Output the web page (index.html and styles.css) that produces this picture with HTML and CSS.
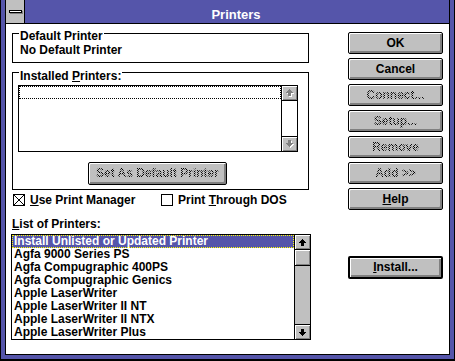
FILE: index.html
```html
<!DOCTYPE html>
<html lang="en">
<head>
    <meta charset="UTF-8">
    <title>Printers</title>
    <link rel="stylesheet" href="styles.css">
</head>
<body>
    <div class="window">
        <div class="frame">
            <div class="titlebar">
                <div class="sysmenu"><span class="sysbar"></span></div>
                <div class="title">Printers</div>
            </div>
            <div class="client">
                <div class="left">
                    <div class="group group-default">
                        <div class="group-title">Default Printer</div>
                        <div class="group-text">No Default Printer</div>
                    </div>
                    <div class="group group-installed">
                        <div class="group-title">Installed <u>P</u>rinters:</div>
                        <div class="listbox listbox-small">
                            <div class="list-items">
                                <div class="focus-row"></div>
                            </div>
                            <div class="scrollbar">
                                <div class="arrow arrow-up off">
                                    <svg width="8" height="8" viewBox="0 0 8 8"><path fill="#fff" d="M4 1h1v1H4zM3 2h3v1H3zM2 3h5v1H2zM1 4h7v1H1zM3 5h3v3H3z"/><path fill="#808080" d="M3 0h1v1H3zM2 1h3v1H2zM1 2h5v1H1zM0 3h7v1H0zM2 4h3v3H2z"/></svg>
                                </div>
                                <div class="track"></div>
                                <div class="arrow arrow-down off">
                                    <svg width="8" height="8" viewBox="0 0 8 8"><path fill="#fff" d="M3 1h3v3H3zM1 4h7v1H1zM2 5h5v1H2zM3 6h3v1H3zM4 7h1v1H4z"/><path fill="#808080" d="M2 0h3v3H2zM0 3h7v1H0zM1 4h5v1H1zM2 5h3v1H2zM3 6h1v1H3z"/></svg>
                                </div>
                            </div>
                        </div>
                        <button class="btn btn-setdefault" disabled><span class="label">S<u>e</u>t As Default Printer</span></button>
                    </div>
                    <div class="checks">
                        <div class="check">
                            <svg class="check-box" width="12" height="12" viewBox="0 0 12 12"><rect x="0.5" y="0.5" width="11" height="11" fill="#fff" stroke="#000"/><path d="M1 1L11 11M11 1L1 11" stroke="#000"/></svg>
                            <span><u>U</u>se Print Manager</span>
                        </div>
                        <div class="check">
                            <svg class="check-box" width="12" height="12" viewBox="0 0 12 12"><rect x="0.5" y="0.5" width="11" height="11" fill="#fff" stroke="#000"/></svg>
                            <span>Print <u>T</u>hrough DOS</span>
                        </div>
                    </div>
                    <div class="list-label"><u>L</u>ist of Printers:</div>
                    <div class="listbox listbox-printers">
                        <div class="list-items">
                            <div class="item selected">Install Unlisted or Updated Printer</div>
                            <div class="item">Agfa 9000 Series PS</div>
                            <div class="item">Agfa Compugraphic 400PS</div>
                            <div class="item">Agfa Compugraphic Genics</div>
                            <div class="item">Apple LaserWriter</div>
                            <div class="item">Apple LaserWriter II NT</div>
                            <div class="item">Apple LaserWriter II NTX</div>
                            <div class="item">Apple LaserWriter Plus</div>
                        </div>
                        <div class="scrollbar scrollbar-on">
                            <div class="arrow arrow-up">
                                <svg width="7" height="7" viewBox="0 0 7 7"><path fill="#000" d="M3 0h1v1H3zM2 1h3v1H2zM1 2h5v1H1zM0 3h7v1H0zM2 4h3v3H2z"/></svg>
                            </div>
                            <div class="thumb"></div>
                            <div class="track"></div>
                            <div class="arrow arrow-down">
                                <svg width="7" height="7" viewBox="0 0 7 7"><path fill="#000" d="M2 0h3v3H2zM0 3h7v1H0zM1 4h5v1H1zM2 5h3v1H2zM3 6h1v1H3z"/></svg>
                            </div>
                        </div>
                    </div>
                </div>
                <div class="right">
                    <button class="btn">OK</button>
                    <button class="btn">Cancel</button>
                    <button class="btn" disabled><span class="label"><u>C</u>onnect...</span></button>
                    <button class="btn" disabled><span class="label"><u>S</u>etup...</span></button>
                    <button class="btn" disabled><span class="label"><u>R</u>emove</span></button>
                    <button class="btn" disabled><span class="label"><u>A</u>dd &gt;&gt;</span></button>
                    <button class="btn"><u>H</u>elp</button>
                    <button class="btn btn-default"><u>I</u>nstall...</button>
                </div>
            </div>
        </div>
    </div>
</body>
</html>
```

FILE: styles.css
```css
body {
    margin: 0;
    background: #000;
    font-family: "Liberation Sans", Arial, sans-serif;
    font-size: 12px;
    font-weight: bold;
    line-height: 13px;
    color: #000;
}
u {
    text-decoration-thickness: 1px;
    text-underline-offset: 1px;
}
.window {
    width: 455px;
    height: 361px;
    box-sizing: border-box;
    background: #5555aa;
    border-left: 1px solid #000;
    border-right: 1px solid #000;
    border-bottom: 2px solid #000;
    padding: 0 4px 4px 4px;
    display: flex;
}
.frame {
    flex: 1;
    display: flex;
    flex-direction: column;
    background: #fff;
    border: 1px solid #000;
    border-top: 0;
}
.titlebar {
    height: 23px;
    display: flex;
    background: #5555aa;
    border-bottom: 1px solid #000;
}
.sysmenu {
    width: 18px;
    background: #c0c0c0;
    border-right: 1px solid #000;
    display: flex;
    align-items: center;
    justify-content: center;
}
.sysbar {
    width: 11px;
    height: 1px;
    background: #fff;
    border: 1px solid #000;
    box-shadow: 1px 1px #808080;
}
.title {
    flex: 1;
    color: #fff;
    text-align: center;
    font-size: 13px;
    line-height: 17px;
    padding-top: 6px;
    padding-right: 2px;
}
.client {
    flex: 1;
    display: flex;
    gap: 37px;
    padding-left: 5px;
}
.left {
    width: 300px;
    padding-top: 9px;
}
.group {
    border: 1px solid #000;
    width: 297px;
    margin-left: 1px;
    box-sizing: border-box;
}
.group-title {
    width: max-content;
    background: #fff;
    margin: -4px 0 0 6px;
    padding: 0 1px;
}
.group-text {
    margin-top: 1px;
    padding: 0 0 5px 7px;
}
.group-installed {
    margin-top: 9px;
    padding-bottom: 4px;
}
.group-installed .group-title {
    margin-top: -3px;
}
.listbox {
    display: flex;
    border: 1px solid #000;
    background: #fff;
    box-sizing: border-box;
}
.list-items {
    flex: 1;
    min-width: 0;
}
.listbox-small {
    width: 280px;
    height: 67px;
    margin: 2px 0 0 5px;
}
.focus-row {
    height: 13px;
    border: 1px dotted #000;
    box-sizing: border-box;
}
.scrollbar {
    width: 16px;
    border-left: 1px solid #000;
    box-sizing: border-box;
    display: flex;
    flex-direction: column;
}
.arrow {
    height: 15px;
    box-sizing: border-box;
    background: #c0c0c0;
    box-shadow: inset 1px 1px #fff, inset -1px -1px #808080;
    display: flex;
    align-items: center;
    justify-content: center;
}
.arrow-up {
    border-bottom: 1px solid #000;
}
.arrow-down {
    border-top: 1px solid #000;
}
.arrow svg {
    display: block;
    shape-rendering: crispEdges;
}
.track {
    flex: 1;
}
.scrollbar-on .track {
    background: #c0c0c0;
}
.thumb {
    height: 16px;
    box-sizing: border-box;
    background: #c0c0c0;
    border-bottom: 1px solid #000;
    box-shadow: inset 1px 1px #fff, inset -1px -1px #808080;
}
.btn {
    display: block;
    width: 95px;
    height: 22px;
    box-sizing: border-box;
    padding: 0;
    margin: 0;
    font: inherit;
    line-height: 20px;
    color: #000;
    text-align: center;
    background: #c0c0c0;
    border: 1px solid #000;
    border-radius: 2px;
    box-shadow: inset 1px 1px #fff, inset -2px -2px #808080;
}
.btn .label {
    background: repeating-conic-gradient(#000 0 25%, transparent 0 50%) 0 0 / 2px 2px;
    -webkit-background-clip: text;
    background-clip: text;
    color: transparent;
}
.btn-setdefault {
    width: 139px;
    height: 23px;
    line-height: 21px;
    margin: 10px 0 0 75px;
}
.btn-default {
    height: 23px;
    border-width: 2px;
    line-height: 19px;
    margin-top: 42px;
}
.checks {
    display: grid;
    grid-template-columns: 148px auto;
    padding-left: 2px;
    margin-top: 4px;
}
.check {
    display: flex;
    gap: 5px;
    align-items: flex-start;
}
.check-box {
    display: block;
    shape-rendering: crispEdges;
}
.list-label {
    margin-top: 11px;
    padding-left: 1px;
}
.listbox-printers {
    width: 300px;
    height: 106px;
    margin-top: 3px;
}
.item {
    height: 13px;
    padding-left: 2px;
    white-space: nowrap;
}
.item.selected {
    background: #5555aa;
    color: #fff;
    outline: 1px dotted #ff0;
    outline-offset: -1px;
}
.right {
    width: 95px;
    padding-top: 8px;
    display: flex;
    flex-direction: column;
    gap: 4px;
}
```
